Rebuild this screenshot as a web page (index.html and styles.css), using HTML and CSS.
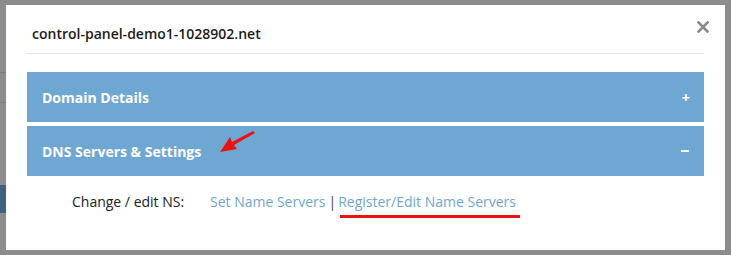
FILE: index.html
```html
<!DOCTYPE html>
<html lang="en">
<head>
    <meta charset="UTF-8">
    <meta name="viewport" content="width=device-width, initial-scale=1.0">
    <title>Domain Settings</title>
    <link rel="stylesheet" href="styles.css">
</head>
<body>

    <div class="modal">
        <div class="modal-header">
            <h4 class="modal-title">control-panel-demo1-1028902.net</h4>
            <button class="close-button" aria-label="Close">
                <svg width="12" height="12" viewBox="0 0 12 12">
                    <path d="M1.5 1.5 L10.5 10.5 M10.5 1.5 L1.5 10.5" stroke="#8a8a8a" stroke-width="2.6" stroke-linecap="square"/>
                </svg>
            </button>
        </div>

        <div class="panel">
            <span class="panel-title">Domain Details</span>
            <span class="panel-toggle">+</span>
        </div>
        <div class="panel">
            <span class="panel-title">DNS Servers &amp; Settings</span>
            <span class="panel-toggle minus"></span>
            <!-- annotation arrow -->
            <svg class="arrow" width="40" height="26" viewBox="0 0 40 26">
                <path d="M35 1 L37 3 L16 15 L19 19 L2 22 L12 7 L14 12 Z" fill="#e8140f"/>
            </svg>
        </div>

        <div class="ns-row">
            <span class="ns-label">Change / edit NS:</span>
            <a href="#" class="ns-link">Set Name Servers</a>
            <span class="ns-sep">|</span>
            <a href="#" class="ns-link marked">Register/Edit Name Servers</a>
        </div>
    </div>

</body>
</html>
```

FILE: styles.css
```css
* {
    margin: 0;
    padding: 0;
    box-sizing: border-box;
}

body {
    font-family: 'Open Sans', 'DejaVu Sans', sans-serif;
    background-color: #8c8c8c;
    background-image:
        linear-gradient(#3f617f, #3f617f),
        linear-gradient(#7d7d7d, #7d7d7d),
        linear-gradient(#7d7d7d, #7d7d7d);
    background-repeat: no-repeat;
    background-size: 6px 28px, 6px 1px, 6px 1px;
    background-position: 0 185px, 0 72px, 0 102px;
    height: 255px;
    overflow: hidden;
    padding: 5px 6px 0 6px;
}

.modal {
    background: #ffffff;
    width: 719px;
    height: 245px;
    padding: 0 21px;
}

.modal-header {
    height: 49px;
    border-bottom: 1px solid #e5e5e5;
    display: flex;
    align-items: center;
    justify-content: space-between;
    padding: 0 0 0 5px;
}

.modal-title {
    font-size: 14px;
    font-weight: 600;
    color: #1b1b1b;
    margin-top: 9px;
}

.close-button {
    border: none;
    background: none;
    cursor: pointer;
    width: 12px;
    height: 12px;
    margin: 0 -5px 4px 0;
    display: flex;
}

.panel {
    position: relative;
    background-color: #6fa7d3;
    height: 50px;
    margin-top: 18px;
    display: flex;
    align-items: center;
    justify-content: space-between;
    padding: 0 14px 0 15px;
    color: #ffffff;
}

.panel + .panel {
    margin-top: 4px;
}

.panel-title {
    font-size: 14px;
    font-weight: 700;
}

.panel-toggle {
    font-size: 15px;
    font-weight: 700;
}

.panel-toggle.minus {
    width: 8px;
    height: 2px;
    background: #ffffff;
    margin-right: 1px;
}

.arrow {
    position: absolute;
    left: 191px;
    top: 4px;
}

.ns-row {
    display: flex;
    align-items: baseline;
    padding: 16px 0 0 45px;
    font-size: 14px;
}

.ns-label {
    color: #222;
    width: 138px;
}

.ns-link {
    color: #6fa7d3;
    text-decoration: none;
}

.ns-sep {
    color: #444;
    margin: 0 2px 0 3px;
}

.marked {
    position: relative;
}

/* red annotation underline */
.marked::after {
    content: "";
    position: absolute;
    left: 2px;
    right: -4px;
    bottom: -7px;
    height: 3px;
    background: #e8140f;
}
```
